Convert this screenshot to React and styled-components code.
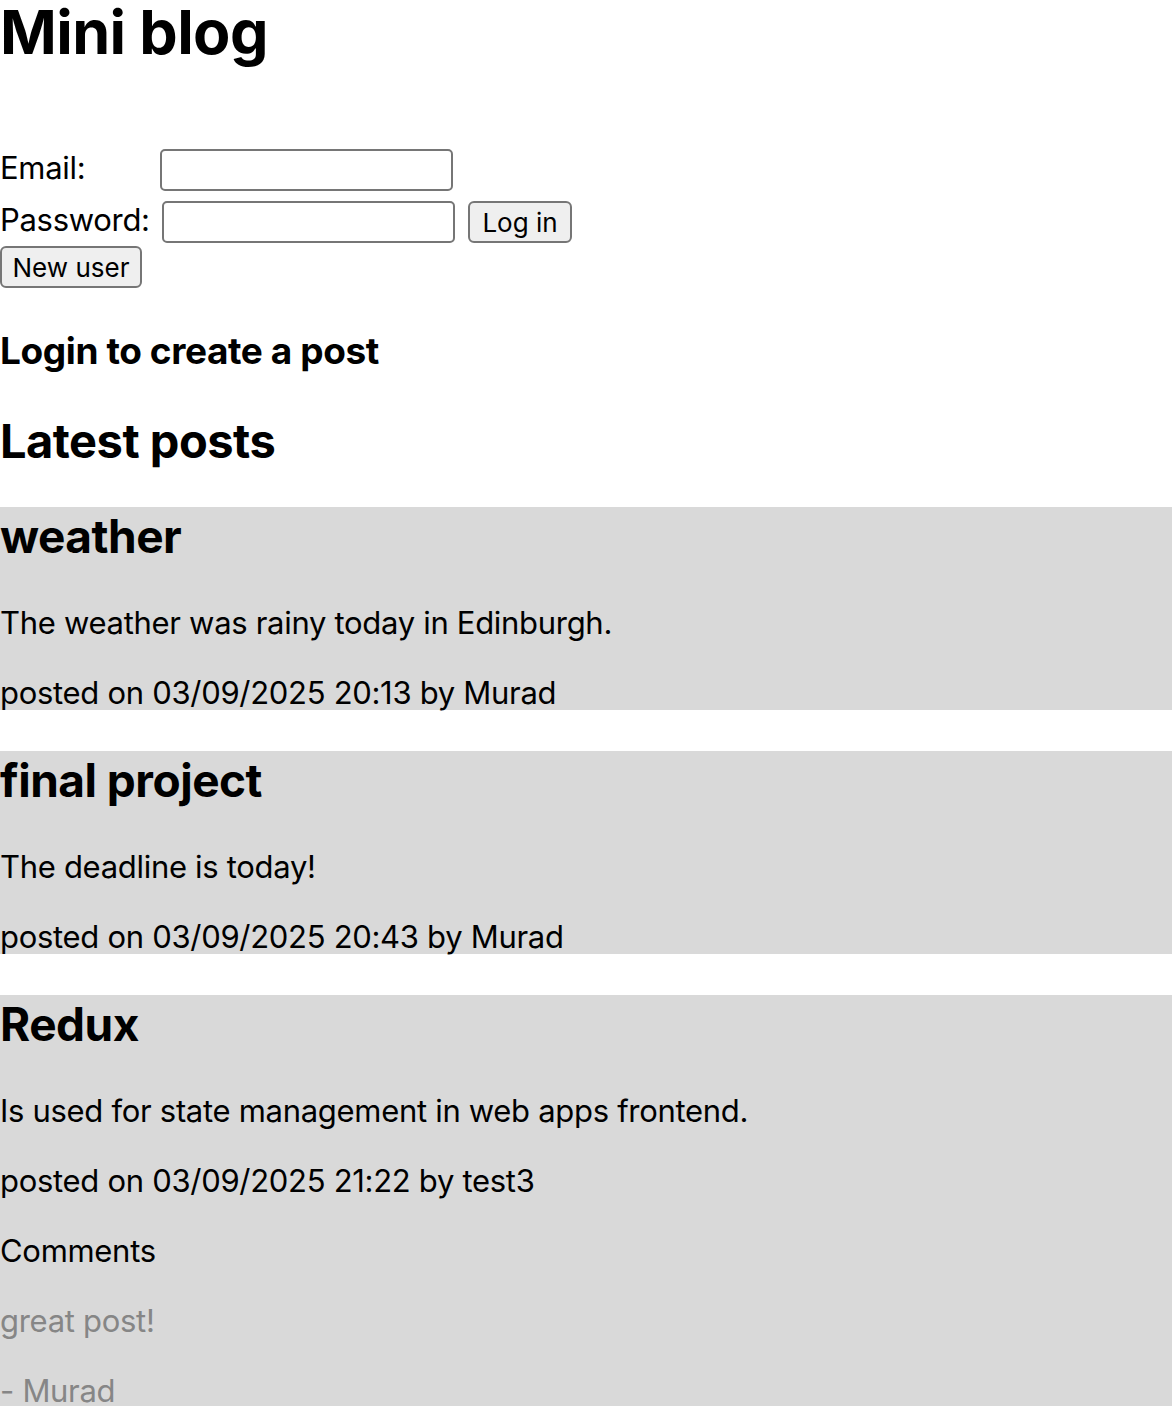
import React from "react";
import styled, { createGlobalStyle } from "styled-components";

const Global = createGlobalStyle`
  html, body { margin: 0; padding: 0; background: #fff; }
  body {
    font-family: Inter, "Noto Sans", "Liberation Sans", sans-serif;
    font-size: 31px;
    color: #000;
  }
`;

const Page = styled.div`
  display: flex;
  flex-direction: column;
`;

const Title = styled.h1`
  margin: 0;
  font-size: 61px;
  line-height: 64px;
  font-weight: 700;
  letter-spacing: -0.6px;
`;

const LoginForm = styled.form`
  display: flex;
  flex-direction: column;
  margin-top: 85px;
`;

const FormRow = styled.div`
  display: flex;
  align-items: center;
  height: 42px;
  margin-top: ${(p) => p.$gap || 0}px;
`;

const Label = styled.label`
  width: ${(p) => p.$w}px;
  flex: none;
  font-size: 31px;
  letter-spacing: -0.3px;
  padding-bottom: 5px;
`;

const TextInput = styled.input`
  box-sizing: border-box;
  width: 293px;
  height: 42px;
  border: 2px solid #767676;
  border-radius: 5px;
  background: #fff;
  padding: 2px 4px;
  font-size: 26px;
  font-family: inherit;
`;

const Button = styled.button`
  box-sizing: border-box;
  height: 42px;
  width: ${(p) => p.$w}px;
  margin-left: ${(p) => p.$ml || 0}px;
  border: 2px solid #767676;
  border-radius: 6px;
  background: #efefef;
  color: #000;
  font-family: Inter, "Noto Sans", sans-serif;
  font-size: 26px;
  padding: 0;
  display: flex;
  align-items: center;
  justify-content: center;
  cursor: pointer;
`;

const SubHeading = styled.h3`
  margin: 41px 0 0;
  font-size: 37px;
  line-height: 44px;
  font-weight: 700;
  letter-spacing: -0.4px;
`;

const SectionHeading = styled.h2`
  margin: 40px 0 0;
  font-size: 47px;
  line-height: 56px;
  font-weight: 700;
  letter-spacing: -0.5px;
`;

const PostList = styled.div`
  display: flex;
  flex-direction: column;
  gap: 41px;
  margin-top: 38px;
`;

const PostCard = styled.article`
  background: #d9d9d9;
  display: flex;
  flex-direction: column;
`;

const PostTitle = styled.h2`
  margin: 0;
  font-size: 46px;
  line-height: 58px;
  font-weight: 700;
  letter-spacing: -0.5px;
`;

const Text = styled.p`
  margin: ${(p) => p.$top}px 0 0;
  font-size: 31px;
  line-height: 34px;
  letter-spacing: -0.3px;
  color: ${(p) => (p.$muted ? "#868686" : "#000")};
`;

const posts = [
  {
    title: "weather",
    body: "The weather was rainy today in Edinburgh.",
    meta: "posted on 03/09/2025 20:13 by Murad",
  },
  {
    title: "final project",
    body: "The deadline is today!",
    meta: "posted on 03/09/2025 20:43 by Murad",
  },
  {
    title: "Redux",
    body: "Is used for state management in web apps frontend.",
    meta: "posted on 03/09/2025 21:22 by test3",
    comments: [{ text: "great post!", author: "Murad" }],
  },
];

export default function App() {
  return (
    <Page>
      <Global />
      <Title>Mini blog</Title>
      <LoginForm onSubmit={(e) => e.preventDefault()}>
        <FormRow>
          <Label $w={160}>Email:</Label>
          <TextInput type="email" />
        </FormRow>
        <FormRow $gap={10}>
          <Label $w={162}>Password:</Label>
          <TextInput type="password" />
          <Button $w={104} $ml={13} type="submit">Log in</Button>
        </FormRow>
        <FormRow $gap={3}>
          <Button $w={142} type="button">New user</Button>
        </FormRow>
      </LoginForm>
      <SubHeading>Login to create a post</SubHeading>
      <SectionHeading>Latest posts</SectionHeading>
      <PostList>
        {posts.map((p) => (
          <PostCard key={p.title}>
            <PostTitle>{p.title}</PostTitle>
            <Text $top={41}>{p.body}</Text>
            <Text $top={36}>{p.meta}</Text>
            {p.comments && (
              <>
                <Text $top={36}>Comments</Text>
                {p.comments.map((c) => (
                  <React.Fragment key={c.text}>
                    <Text $top={36} $muted>{c.text}</Text>
                    <Text $top={36} $muted>- {c.author}</Text>
                  </React.Fragment>
                ))}
              </>
            )}
          </PostCard>
        ))}
      </PostList>
    </Page>
  );
}
